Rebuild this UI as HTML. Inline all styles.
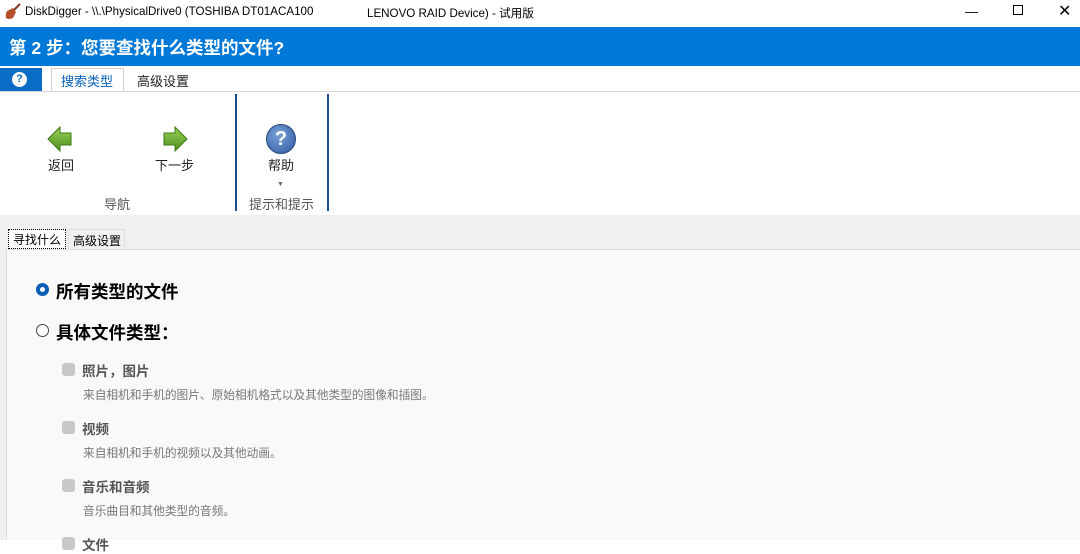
<!DOCTYPE html>
<html><head><meta charset="utf-8"><style>
*{margin:0;padding:0;box-sizing:border-box}
body{width:1080px;height:540px;overflow:hidden;background:#fff;font-family:"Liberation Sans","Noto Sans CJK SC",sans-serif;position:relative;color:#000}
.a{position:absolute;white-space:nowrap}
</style></head><body>
<svg class="a" style="left:4px;top:3px" width="18" height="18" viewBox="0 0 18 18"><path d="M16 1 L10 7" stroke="#7a3a1a" stroke-width="2"/><path d="M3 8 L9 5 L12 9 L9 15 Q4 17 2 15 Q1 12 3 8Z" fill="#b5502a"/></svg>
<div class="a" style="left:25px;top:5px;font-size:11.6px;color:#000">DiskDigger - \\.\PhysicalDrive0 (TOSHIBA DT01ACA100</div>
<div class="a" style="left:367px;top:5px;font-size:11.6px;color:#000">LENOVO RAID Device) - 试用版</div>
<div class="a" style="left:965px;top:4px;font-size:13px">—</div>
<div class="a" style="left:1013px;top:5px;width:10px;height:10px;border:1px solid #000"></div>
<div class="a" style="left:1058px;top:1px;font-size:16px">✕</div>
<div class="a" style="left:0;top:27px;width:1080px;height:39px;background:#0078d7"></div>
<div class="a" style="left:9px;top:35px;font-size:17.5px;font-weight:bold;color:#fff">第 2 步：您要查找什么类型的文件?</div>
<div class="a" style="left:0;top:68px;width:42px;height:23px;background:#0a6cc4"></div>
<div class="a" style="left:12px;top:72px;width:15px;height:15px;border-radius:50%;background:#fff;color:#0a6cc4;font-size:11px;font-weight:bold;text-align:center;line-height:15px">?</div>
<div class="a" style="left:51px;top:68px;width:73px;height:24px;border:1px solid #d0d0d0;border-bottom:none;background:#fff"></div>
<div class="a" style="left:61px;top:71px;font-size:13px;color:#0a62b8">搜索类型</div>
<div class="a" style="left:137px;top:71px;font-size:13px;color:#222">高级设置</div>
<div class="a" style="left:0;top:91px;width:1080px;height:1px;background:#d8d8d8"></div>
<svg class="a" style="left:47px;top:126px" width="26" height="26" viewBox="0 0 26 26"><defs><linearGradient id="g" x1="0" y1="0" x2="0" y2="1"><stop offset="0" stop-color="#9bd25a"/><stop offset="1" stop-color="#4b8e1c"/></linearGradient></defs><path d="M1 13 L13 1 L13 7 L24 7 L24 19 L13 19 L13 25Z" fill="url(#g)" stroke="#3d7a14"/></svg>
<svg class="a" style="left:162px;top:126px" width="26" height="26" viewBox="0 0 26 26"><path d="M25 13 L13 1 L13 7 L2 7 L2 19 L13 19 L13 25Z" fill="url(#g)" stroke="#3d7a14"/></svg>
<div class="a" style="left:48px;top:155px;font-size:13px;color:#222">返回</div>
<div class="a" style="left:155px;top:155px;font-size:13px;color:#222">下一步</div>
<div class="a" style="left:104px;top:194px;font-size:13px;color:#555">导航</div>
<div class="a" style="left:235px;top:94px;width:2px;height:117px;background:#1c4d8c"></div>
<div class="a" style="left:327px;top:94px;width:2px;height:117px;background:#1c4d8c"></div>
<div class="a" style="left:266px;top:124px;width:30px;height:30px;border-radius:50%;background:radial-gradient(circle at 40% 35%,#7aa0d8,#2e5aa0);border:1px solid #24477f;color:#fff;font-size:20px;font-weight:bold;text-align:center;line-height:28px">?</div>
<div class="a" style="left:268px;top:155px;font-size:13px;color:#222">帮助</div>
<div class="a" style="left:277px;top:181px;font-size:7px;color:#666">▼</div>
<div class="a" style="left:249px;top:194px;font-size:13px;color:#555">提示和提示</div>
<div class="a" style="left:0;top:215px;width:1080px;height:325px;background:#f0f0f0"></div>
<div class="a" style="left:6px;top:249px;width:1074px;height:291px;background:#f9f9f9;border-left:1px solid #ddd;border-top:1px solid #ddd"></div>
<div class="a" style="left:8px;top:229px;width:58px;height:20px;border:1px dotted #000;background:#fff"></div>
<div class="a" style="left:13px;top:231px;font-size:12px">寻找什么</div>
<div class="a" style="left:68px;top:229px;width:57px;height:21px;border:1px solid #ddd;border-bottom:none"></div>
<div class="a" style="left:73px;top:232px;font-size:12px">高级设置</div>
<div class="a" style="left:36px;top:283px;width:13px;height:13px;border-radius:50%;border:4px solid #0a5fb4;background:#fff"></div>
<div class="a" style="left:56px;top:279px;font-size:17.5px;font-weight:bold">所有类型的文件</div>
<div class="a" style="left:36px;top:324px;width:13px;height:13px;border-radius:50%;border:1px solid #444;background:#fff"></div>
<div class="a" style="left:56px;top:320px;font-size:17.5px;font-weight:bold">具体文件类型：</div>
<div class="a" style="left:62px;top:363px;width:13px;height:13px;border-radius:3px;background:#c8c8c8"></div>
<div class="a" style="left:82px;top:360px;font-size:13.5px;font-weight:bold;color:#555">照片，图片</div>
<div class="a" style="left:83px;top:386px;font-size:11.7px;color:#777">来自相机和手机的图片、原始相机格式以及其他类型的图像和插图。</div>
<div class="a" style="left:62px;top:421px;width:13px;height:13px;border-radius:3px;background:#c8c8c8"></div>
<div class="a" style="left:82px;top:418px;font-size:13.5px;font-weight:bold;color:#555">视频</div>
<div class="a" style="left:83px;top:444px;font-size:11.7px;color:#777">来自相机和手机的视频以及其他动画。</div>
<div class="a" style="left:62px;top:479px;width:13px;height:13px;border-radius:3px;background:#c8c8c8"></div>
<div class="a" style="left:82px;top:476px;font-size:13.5px;font-weight:bold;color:#555">音乐和音频</div>
<div class="a" style="left:83px;top:502px;font-size:11.7px;color:#777">音乐曲目和其他类型的音频。</div>
<div class="a" style="left:62px;top:537px;width:13px;height:13px;border-radius:3px;background:#c8c8c8"></div>
<div class="a" style="left:82px;top:534px;font-size:13.5px;font-weight:bold;color:#555">文件</div>
</body></html>
